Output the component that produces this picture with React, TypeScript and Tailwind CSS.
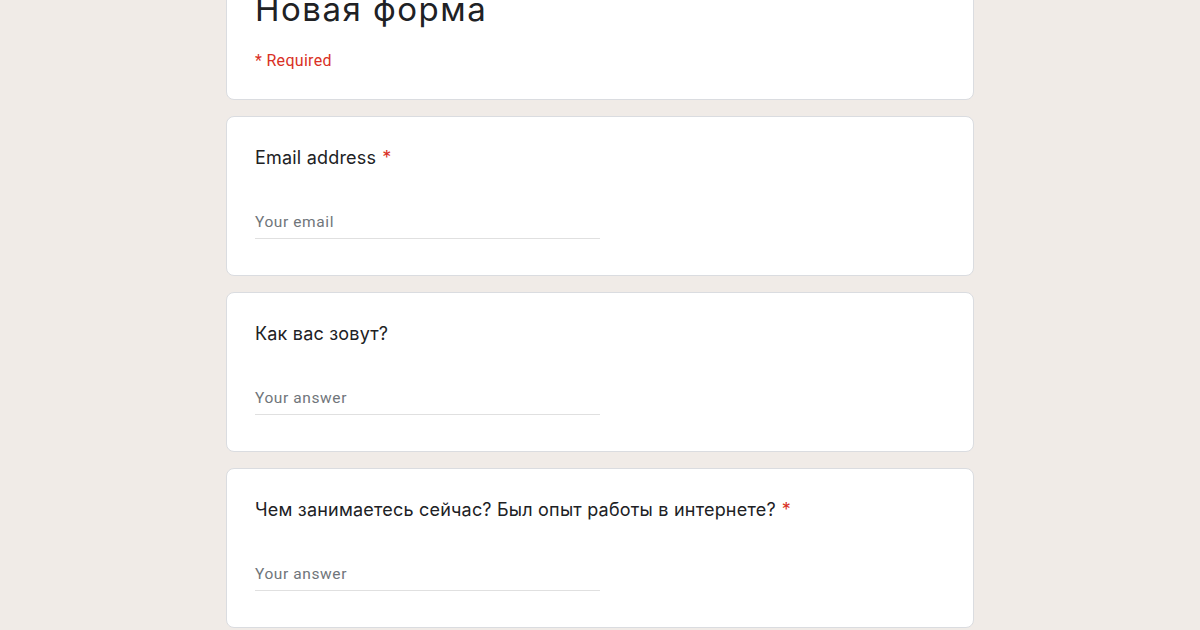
const questions = [
  { title: 'Email address', placeholder: 'Your email', required: true },
  { title: 'Как вас зовут?', placeholder: 'Your answer', required: false },
  {
    title: 'Чем занимаетесь сейчас? Был опыт работы в интернете?',
    placeholder: 'Your answer',
    required: true,
  },
]

function QuestionCard({ title, placeholder, required }: { title: string; placeholder: string; required: boolean }) {
  return (
    <div className="h-[160px] rounded-[8px] border border-[#dadce0] bg-white px-[28px] pt-[29px]">
      <div className="h-[24px] text-[18px] leading-[24px] tracking-[0.2px] text-[#202124] font-['Inter',sans-serif]">
        {title}
        {required && <span className="ml-[6px] text-[#d93025]">*</span>}
      </div>
      <div className="mt-[37px] flex h-[32px] w-[345px] items-center border-b border-[#e0e0e0] text-[15.5px] tracking-[0.6px] text-[#70757a] font-['Roboto',sans-serif]">
        {placeholder}
      </div>
    </div>
  )
}

export default function App() {
  return (
    <div className="h-[630px] w-full overflow-hidden bg-[#f0ebe7]">
      <div className="mx-auto flex w-[748px] flex-col gap-[16px]">
        {/* Header card */}
        <div className="-mt-[40px] h-[140px] rounded-[8px] border border-[#dadce0] bg-white px-[28px] pt-[28px]">
          <div className="h-[40px] text-[33px] leading-[40px] tracking-[1.5px] text-[#202124] font-['Inter',sans-serif]">
            Новая форма
          </div>
          <div className="mt-[22px] text-[16px] leading-[20px] tracking-[0.3px] text-[#d93025] font-['Roboto',sans-serif]">
            * Required
          </div>
        </div>
        {questions.map(q => (
          <QuestionCard key={q.title} {...q} />
        ))}
      </div>
    </div>
  )
}
